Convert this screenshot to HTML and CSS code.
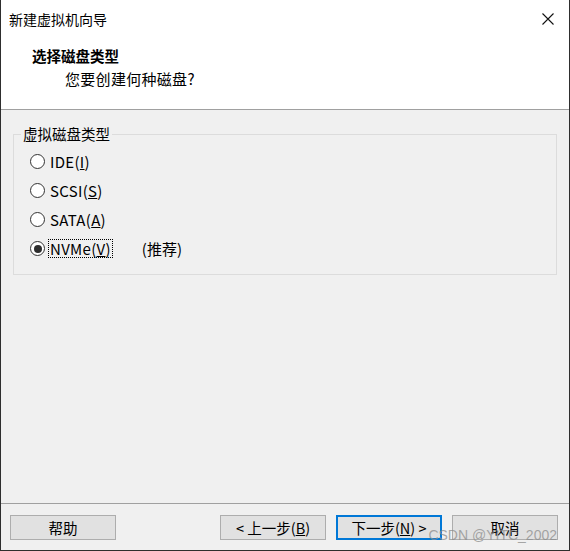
FILE: index.html
```html
<!DOCTYPE html>
<html lang="zh-CN">
  <head>
    <meta charset="UTF-8" />
    <title>新建虚拟机向导</title>
    <link rel="stylesheet" href="styles.css">
  </head>
  <body>
    <div class="window">
      <!-- 标题栏与页头 -->
      <div class="top">
        <div class="titlebar">
          <span class="title">新建虚拟机向导</span>
          <svg class="close" width="12" height="12" viewBox="0 0 12 12">
            <path d="M0.5 0.5 L11.5 11.5 M11.5 0.5 L0.5 11.5" stroke="#111" stroke-width="1.1" fill="none" />
          </svg>
        </div>
        <div class="head">
          <div class="heading">选择磁盘类型</div>
          <div class="sub">您要创建何种磁盘?</div>
        </div>
      </div>

      <!-- 内容 -->
      <div class="content">
        <fieldset class="group">
          <legend>虚拟磁盘类型</legend>
          <div class="option"><span class="radio"></span><span class="label">IDE(<u>I</u>)</span></div>
          <div class="option"><span class="radio"></span><span class="label">SCSI(<u>S</u>)</span></div>
          <div class="option"><span class="radio"></span><span class="label">SATA(<u>A</u>)</span></div>
          <div class="option">
            <span class="radio checked"></span><span class="label focus">NVMe(<u>V</u>)</span>
            <span class="hint">(推荐)</span>
          </div>
        </fieldset>
      </div>

      <!-- 按钮 -->
      <div class="footer">
        <button class="btn">帮助</button>
        <div class="spacer"></div>
        <button class="btn">&lt; 上一步(<u>B</u>)</button>
        <button class="btn default">下一步(<u>N</u>) &gt;</button>
        <button class="btn">取消</button>
        <span class="watermark">CSDN @YITC_2002</span>
      </div>
    </div>
  </body>
</html>
```

FILE: styles.css
```css
body {
  margin: 0;
  background: #f0f0f0;
  font-family: "Noto Sans CJK SC", "Noto Sans", sans-serif;
  font-size: 14px;
  color: #000;
}
.window {
  width: 570px;
  height: 551px;
  box-sizing: border-box;
  border: 1px solid #2e2e2e;
  border-top: none;
  display: flex;
  flex-direction: column;
  background: #f0f0f0;
}
.top {
  background: #fff;
  height: 110px;
  box-sizing: border-box;
  border-bottom: 1px solid #a0a0a0;
}
.titlebar {
  height: 38px;
  display: flex;
  align-items: center;
  justify-content: space-between;
  padding: 0 15px 0 8px;
}
.title {
  font-size: 14px;
}
.head {
  padding-left: 31px;
}
.heading {
  font-weight: bold;
  font-size: 14.5px;
  line-height: 20px;
  margin-top: 8px;
}
.sub {
  padding-left: 33px;
  font-size: 15px;
  line-height: 22px;
  margin-top: 2px;
  letter-spacing: 0.3px;
}
.content {
  flex: 1;
  padding: 16px 12px 0 12px;
}
.group {
  margin: 0;
  height: 149px;
  box-sizing: border-box;
  border: 1px solid #dcdcdc;
  padding: 5px 0 0 16px;
}
.group legend {
  padding: 0 2px;
  margin-left: -9px;
  font-size: 14.5px;
  line-height: 16px;
}
.option {
  display: flex;
  align-items: center;
  height: 29px;
}
.radio {
  width: 15px;
  height: 15px;
  box-sizing: border-box;
  border: 1px solid #333;
  border-radius: 50%;
  background: #fff;
  position: relative;
  margin-right: 4px;
}
.radio.checked::after {
  content: "";
  position: absolute;
  left: 2.5px;
  top: 2.5px;
  width: 8px;
  height: 8px;
  border-radius: 50%;
  background: #2e2e2e;
}
.label {
  font-size: 15px;
  letter-spacing: 0.3px;
  line-height: 17px;
  padding: 0 1px;
}
.label.focus {
  outline: 1px dotted #000;
}
.hint {
  font-size: 15px;
  margin-left: 30px;
}
.footer {
  position: relative;
  border-top: 1px solid #a0a0a0;
  display: flex;
  align-items: center;
  gap: 10px;
  padding: 11px 11px 10px 9px;
}
.spacer {
  flex: 1;
}
.btn {
  width: 106px;
  height: 25px;
  box-sizing: border-box;
  border: 1px solid #adadad;
  background: #e1e1e1;
  font-family: inherit;
  font-size: 14.5px;
  padding: 0;
  color: #000;
}
.btn.default {
  border: 2px solid #0078d7;
}
.watermark {
  position: absolute;
  right: 12px;
  top: 23px;
  font-family: "Liberation Sans", Arial, sans-serif;
  font-size: 14px;
  color: rgba(140, 140, 140, 0.75);
  pointer-events: none;
}
```
